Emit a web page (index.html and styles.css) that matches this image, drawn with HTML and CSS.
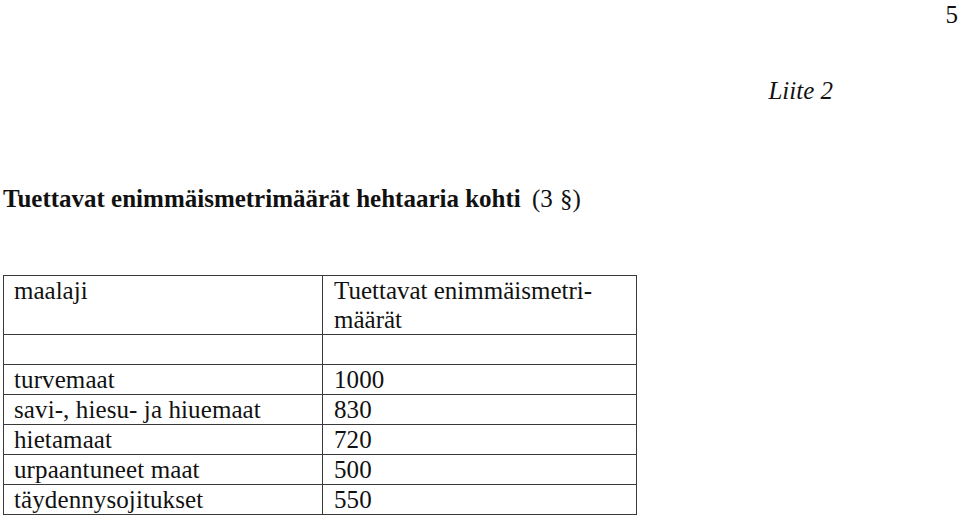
FILE: index.html
```html
<!DOCTYPE html>
<html lang="fi">
<head>
<meta charset="utf-8">
<title>Liite 2</title>
<link rel="stylesheet" href="styles.css">
</head>
<body>
<div class="page">
  <div class="page-number">5</div>
  <div class="appendix">Liite 2</div>
  <h1 class="title"><strong>Tuettavat enimmäismetrimäärät hehtaaria kohti</strong> <span class="ref">(3 §)</span></h1>
  <table class="data">
    <colgroup>
      <col class="c1">
      <col class="c2">
    </colgroup>
    <tr class="head">
      <td>maalaji</td>
      <td>Tuettavat enimmäismetri-<br>määrät</td>
    </tr>
    <tr class="empty"><td></td><td></td></tr>
    <tr class="row"><td>turvemaat</td><td>1000</td></tr>
    <tr class="row"><td>savi-, hiesu- ja hiuemaat</td><td>830</td></tr>
    <tr class="row"><td>hietamaat</td><td>720</td></tr>
    <tr class="row"><td>urpaantuneet maat</td><td>500</td></tr>
    <tr class="row"><td>täydennysojitukset</td><td>550</td></tr>
  </table>
</div>
</body>
</html>
```
FILE: styles.css
```css
html, body {
  margin: 0;
  padding: 0;
  background: #ffffff;
}
body {
  font-family: "Liberation Serif", "Times New Roman", serif;
  font-size: 25px;
  line-height: 29px;
  color: #111111;
}
.page {
  width: 960px;
  height: 520px;
  padding-left: 3px;
  box-sizing: border-box;
  overflow: hidden;
}
.page-number {
  text-align: right;
  padding-right: 2px;
  height: 29px;
}
.appendix {
  margin-top: 47px;
  text-align: right;
  padding-right: 127px;
  font-style: italic;
}
.title {
  margin: 79px 0 0 0;
  font-size: 25px;
  line-height: 29px;
  font-weight: normal;
}
.title strong {
  font-weight: bold;
}
.title .ref {
  margin-left: 5px;
  word-spacing: 1px;
}
.data {
  margin-top: 62px;
  border-collapse: collapse;
  table-layout: fixed;
  width: 633px;
}
.data .c1 { width: 319px; }
.data .c2 { width: 314px; }
.data td {
  border: 1px solid #3a3a3a;
  padding: 0 0 0 10px;
  vertical-align: top;
  line-height: 29px;
  height: 29px;
}
.data td + td {
  padding-left: 11px;
}
.data .row td {
  letter-spacing: 0.1px;
}
```
